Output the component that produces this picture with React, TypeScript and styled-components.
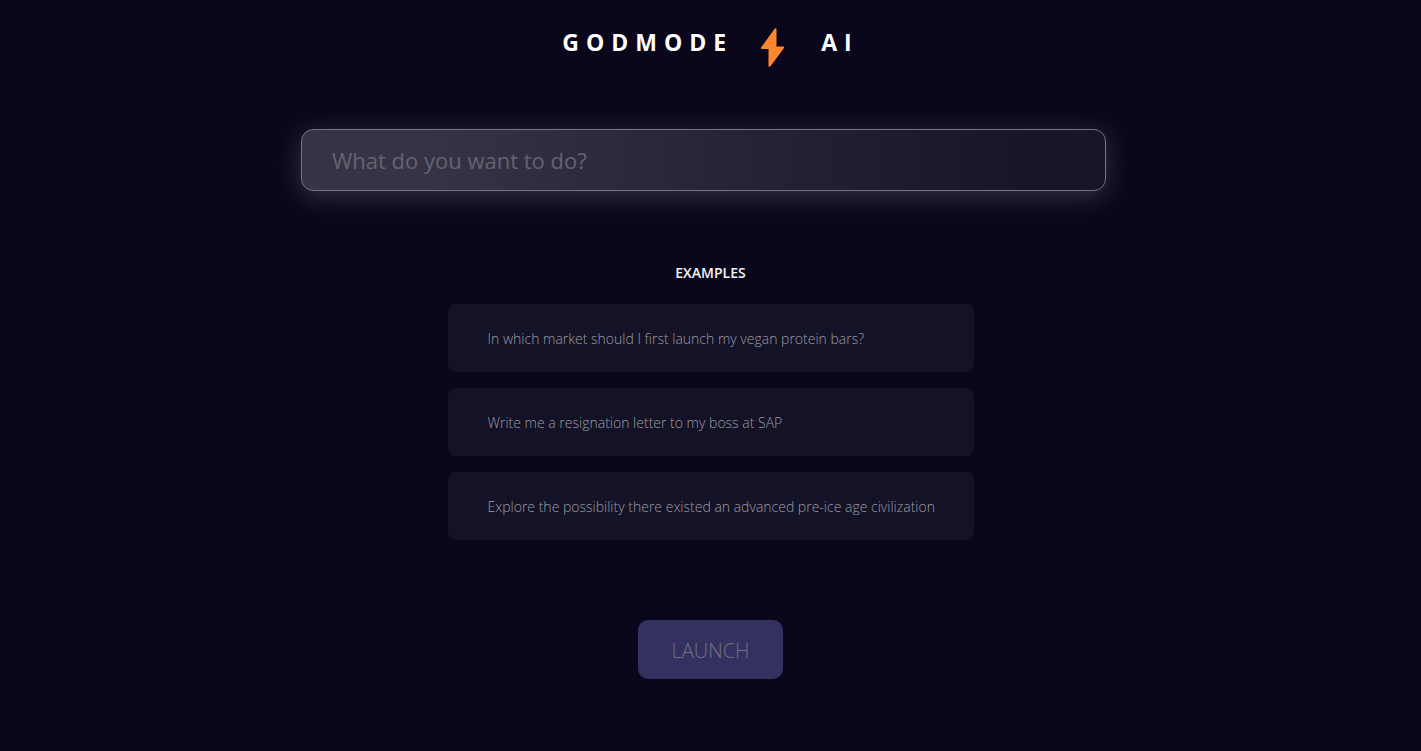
import React, { useState } from "react";
import styled, { createGlobalStyle } from "styled-components";

const GlobalStyle = createGlobalStyle`
  * { box-sizing: border-box; }
  body {
    margin: 0;
    background: #0a071c;
    color: #ffffff;
    font-family: "Segoe UI", "Open Sans", "Noto Sans", sans-serif;
  }
`;

const Page = styled.main`
  display: flex;
  flex-direction: column;
  align-items: center;
  min-height: 100vh;
  padding: 24px 24px 72px;
`;

const Logo = styled.h1`
  display: flex;
  align-items: flex-start;
  margin: 0;
  height: 48px;
  font-size: 23px;
  line-height: 36px;
  font-weight: 700;
  letter-spacing: 7px;
`;

const Bolt = styled.svg`
  width: 48px;
  height: 48px;
  margin: 0 25px 0 15px;
  fill: #ff862d;
`;

const Form = styled.form`
  display: flex;
  flex-direction: column;
  align-items: center;
  width: 100%;
  margin-top: 57px;
`;

const PromptRow = styled.div`
  display: flex;
  justify-content: center;
  width: 100%;
  padding-right: 14px;
`;

const PromptInput = styled.input`
  width: 100%;
  max-width: 805px;
  height: 62px;
  padding: 0 30px;
  border: 1px solid #77728a;
  border-radius: 12px;
  outline: none;
  background: linear-gradient(90deg, #373346 0%, #373346 15%, #171529 90%);
  box-shadow: 0 5px 26px rgba(255, 240, 220, 0.19);
  color: #ffffff;
  font-family: inherit;
  font-size: 22px;

  &::placeholder {
    color: #656271;
    opacity: 1;
  }
`;

const Examples = styled.section`
  display: flex;
  flex-direction: column;
  gap: 16px;
  width: 526px;
  max-width: 100%;
  margin-top: 72px;
`;

const ExamplesTitle = styled.h2`
  margin: 0 0 5px;
  font-size: 14px;
  line-height: 20px;
  font-weight: 600;
  text-align: center;
  color: #f4f4f6;
`;

const ExampleCard = styled.button`
  min-height: 68px;
  padding: 2px 38px 0 40px;
  border: 0;
  border-radius: 8px;
  background: #141226;
  color: #9d9ca5;
  font-family: inherit;
  font-size: 14px;
  line-height: 20px;
  font-weight: 300;
  text-align: left;
  cursor: pointer;
`;

const LaunchButton = styled.button`
  width: 145px;
  height: 59px;
  margin-top: 80px;
  padding: 2px 0 0;
  border: 0;
  border-radius: 10px;
  background: #333160;
  color: #727080;
  font-family: inherit;
  font-size: 20px;
  font-weight: 300;
`;

const examples = [
  "In which market should I first launch my vegan protein bars?",
  "Write me a resignation letter to my boss at SAP",
  "Explore the possibility there existed an advanced pre-ice age civilization",
];

export default function App() {
  const [prompt, setPrompt] = useState("");

  return (
    <>
      <GlobalStyle />
      <Page>
        <Logo>
          <span>GODMODE</span>
          <Bolt viewBox="0 0 48 48" aria-hidden="true">
            <path d="M26.8 4.6Q28.5 3.5 28.5 5.5V22.5H35Q36.6 22.7 35.8 24.2L22.5 42.2Q20.8 43.7 20.5 41.8V25H14Q12.4 24.8 13.2 23.3Z" />
          </Bolt>
          <span>AI</span>
        </Logo>
        <Form onSubmit={(event) => event.preventDefault()}>
          <PromptRow>
            <PromptInput
              type="text"
              aria-label="What do you want to do?"
              placeholder="What do you want to do?"
              value={prompt}
              onChange={(event) => setPrompt(event.target.value)}
            />
          </PromptRow>
          <Examples>
            <ExamplesTitle>EXAMPLES</ExamplesTitle>
            {examples.map((text) => (
              <ExampleCard key={text} type="button" onClick={() => setPrompt(text)}>
                {text}
              </ExampleCard>
            ))}
          </Examples>
          <LaunchButton type="submit" disabled={!prompt}>
            LAUNCH
          </LaunchButton>
        </Form>
      </Page>
    </>
  );
}
